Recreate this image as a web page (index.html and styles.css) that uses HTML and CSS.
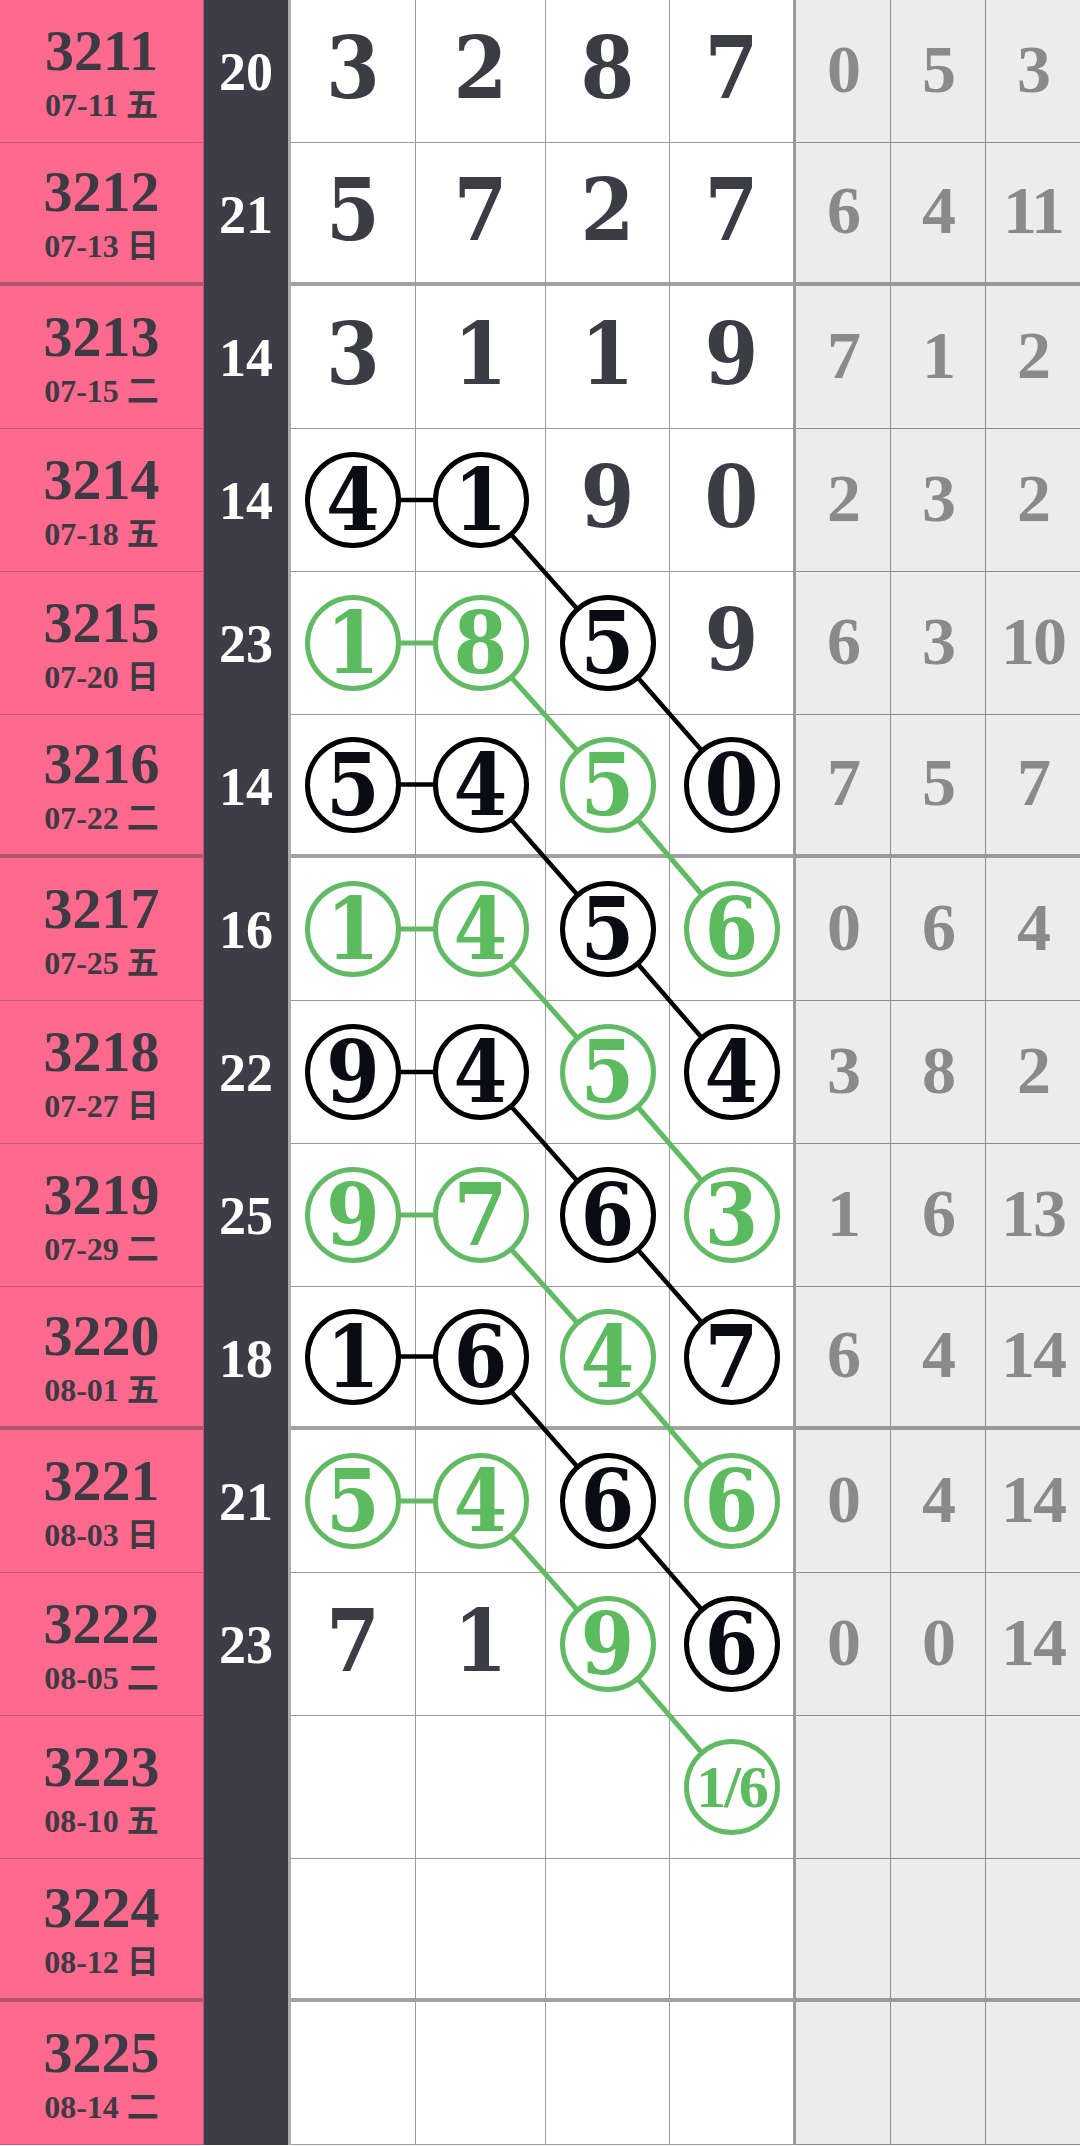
FILE: index.html
```html
<!DOCTYPE html>
<html lang="zh">
<head>
  <meta charset="UTF-8">
  <meta name="viewport" content="width=device-width, initial-scale=1.0">
  <title>走势图</title>
  <link rel="stylesheet" href="styles.css">
</head>
<body>

<div class="board" id="board">
  <svg class="links" id="links" xmlns="http://www.w3.org/2000/svg"></svg>
</div>

<script>
  // issue, date, day, sum, digits, marks (k = black ring, g = green ring), misses
  var rows = [
    ['3211', '07-11', '五', '20', ['3','2','8','7'], '....', ['0','5','3']],
    ['3212', '07-13', '日', '21', ['5','7','2','7'], '....', ['6','4','11']],
    ['3213', '07-15', '二', '14', ['3','1','1','9'], '....', ['7','1','2']],
    ['3214', '07-18', '五', '14', ['4','1','9','0'], 'kk..', ['2','3','2']],
    ['3215', '07-20', '日', '23', ['1','8','5','9'], 'ggk.', ['6','3','10']],
    ['3216', '07-22', '二', '14', ['5','4','5','0'], 'kkgk', ['7','5','7']],
    ['3217', '07-25', '五', '16', ['1','4','5','6'], 'ggkg', ['0','6','4']],
    ['3218', '07-27', '日', '22', ['9','4','5','4'], 'kkgk', ['3','8','2']],
    ['3219', '07-29', '二', '25', ['9','7','6','3'], 'ggkg', ['1','6','13']],
    ['3220', '08-01', '五', '18', ['1','6','4','7'], 'kkgk', ['6','4','14']],
    ['3221', '08-03', '日', '21', ['5','4','6','6'], 'ggkg', ['0','4','14']],
    ['3222', '08-05', '二', '23', ['7','1','9','6'], '..gk', ['0','0','14']],
    ['3223', '08-10', '五', '',   ['','','','1/6'], '...g', ['','','']],
    ['3224', '08-12', '日', '',   ['','','',''],   '....', ['','','']],
    ['3225', '08-14', '二', '',   ['','','',''],   '....', ['','','']]
  ];

  var board = document.getElementById('board');
  var rings = {};

  function cell(cls, html) {
    var d = document.createElement('div');
    d.className = 'cell ' + cls;
    d.innerHTML = html;
    board.appendChild(d);
    return d;
  }

  for (var i = 0; i < rows.length; i++) {
    var r = rows[i];
    var end = (i % 4 === 1) ? ' end' : '';
    cell('issue' + end, '<span class="no">' + r[0] + '</span><span class="date">' + r[1] + ' ' + r[2] + '</span>');
    cell('sum', r[3]);
    for (var c = 0; c < 4; c++) {
      var m = r[5].charAt(c);
      var d = cell('num n' + c + end, '');
      if (m === 'k' || m === 'g') {
        var ring = document.createElement('span');
        ring.className = 'ring ' + (m === 'k' ? 'black' : 'green') + (r[4][c].length > 1 ? ' small' : '');
        ring.textContent = r[4][c];
        d.appendChild(ring);
        rings[i + '-' + c] = ring;
      } else {
        d.textContent = r[4][c];
      }
    }
    for (var j = 0; j < 3; j++) {
      cell('miss m' + j + end, r[6][j]);
    }
  }

  // links between rings: a pair in row s, then one step down-right twice
  var svg = document.getElementById('links');
  var box = board.getBoundingClientRect();
  svg.setAttribute('width', box.width);
  svg.setAttribute('height', box.height);

  function centre(key) {
    var b = rings[key].getBoundingClientRect();
    return [b.left + b.width / 2 - box.left, b.top + b.height / 2 - box.top];
  }

  function link(a, b, colour) {
    var p = centre(a), q = centre(b);
    var line = document.createElementNS('http://www.w3.org/2000/svg', 'line');
    line.setAttribute('x1', p[0]); line.setAttribute('y1', p[1]);
    line.setAttribute('x2', q[0]); line.setAttribute('y2', q[1]);
    line.setAttribute('stroke', colour);
    line.setAttribute('stroke-width', colour === '#000' ? 4.5 : 5);
    svg.appendChild(line);
  }

  for (var s = 3; s <= 10; s++) {
    var col = (s % 2 === 1) ? '#000' : '#62bb64';
    link(s + '-0', s + '-1', col);
    link(s + '-1', (s + 1) + '-2', col);
    link((s + 1) + '-2', (s + 2) + '-3', col);
  }
</script>

</body>
</html>
```

FILE: styles.css
```css
body {
  margin: 0;
  background: #fff;
  font-family: "Liberation Serif", "Noto Sans CJK SC", serif;
}
.board {
  position: relative;
  display: grid;
  grid-template-columns: 204px 87px 125px 130px 124px 126px 95px 95px 94px;
  grid-auto-rows: 143px;
}
.links {
  position: absolute;
  left: 0;
  top: 0;
  z-index: 1;
  pointer-events: none;
}
.cell {
  box-sizing: border-box;
  display: flex;
  align-items: center;
  justify-content: center;
  font-weight: bold;
}
.issue {
  flex-direction: column;
  background: #fd6a8e;
  color: #3d3a44;
  border-right: 1px solid #b45a70;
  border-bottom: 1px solid #bf5a75;
}
.issue.end {
  border-bottom: 4px solid #b2566d;
}
.issue .no {
  font-size: 58px;
  line-height: 60px;
}
.issue .date {
  font-size: 32px;
  line-height: 34px;
  margin-top: 7px;
}
.sum {
  background: #3e3d47;
  color: #fff;
  font-size: 54px;
  border-right: 3px solid #ababab;
}
.num {
  background: #fff;
  color: #3c3c44;
  font-family: "DejaVu Serif Condensed", "DejaVu Serif", serif;
  font-stretch: condensed;
  font-size: 86px;
  padding-bottom: 7px;
  border-right: 1px solid #9a9a9a;
  border-bottom: 1px solid #9a9a9a;
}
.num.end {
  border-bottom: 4px solid #a2a2a2;
}
.num.n3 {
  border-right: 3px solid #9a9a9a;
}
.ring {
  position: relative;
  z-index: 2;
  box-sizing: border-box;
  width: 96px;
  height: 96px;
  margin-top: 7px;
  border-radius: 50%;
  background: #fff;
  display: flex;
  align-items: center;
  justify-content: center;
  line-height: 1;
}
.ring.black {
  border: 5px solid #000;
  color: #0b0b14;
}
.ring.green {
  border: 5px solid #62bb64;
  color: #5cba5f;
}
.ring.small {
  font-family: "Liberation Serif", serif;
  font-size: 60px;
  letter-spacing: -2px;
}
.miss {
  background: #ececec;
  color: #8a8a8a;
  font-size: 68px;
  padding-bottom: 4px;
  letter-spacing: -2px;
  border-right: 1px solid #8c8c8c;
  border-bottom: 1px solid #8c8c8c;
}
.miss.end {
  border-bottom: 4px solid #999;
}
.miss.m2 {
  border-right: none;
}
```
